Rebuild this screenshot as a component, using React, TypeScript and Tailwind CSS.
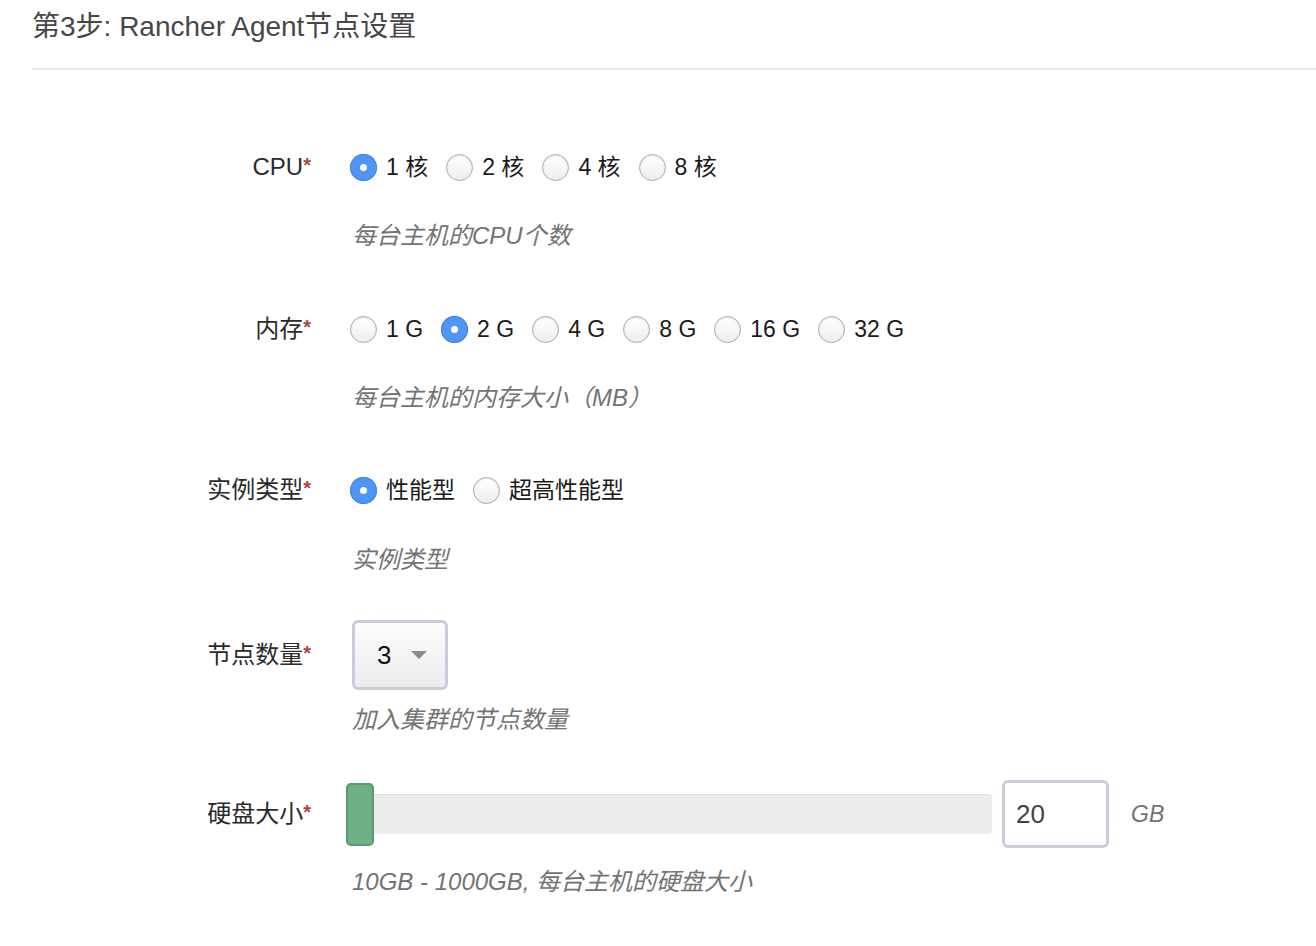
const font = { fontFamily: '"Liberation Sans", "Noto Sans CJK SC", sans-serif' };

type RadioOption = { label: string; checked?: boolean };

const Radio: React.FC<RadioOption> = ({ label, checked }) => {
  return (
    <label className="flex items-center mr-[18px]">
      {checked ? (
        <span className="flex items-center justify-center w-[27px] h-[27px] rounded-full bg-[#4f95f6] shadow-[inset_0_0_0_1px_#3f86ea]">
          <span className="w-[7px] h-[7px] rounded-full bg-white" />
        </span>
      ) : (
        <span className="w-[27px] h-[27px] rounded-full border border-[#a8a8a8] bg-linear-to-b from-white to-[#eeeeee] shadow-[inset_0_1px_2px_rgba(0,0,0,0.1)]" />
      )}
      <span className="ml-[9px] text-[23px] text-[#1a1a1a] whitespace-pre">{label}</span>
    </label>
  );
};

const Label: React.FC<{ text: string }> = ({ text }) => (
  <div className="text-right text-[24px] text-[#2b2b2b] leading-none">
    {text}
    <span className="text-[#a94442] text-[20px] font-bold align-top">*</span>
  </div>
);

const Help: React.FC<{ text: string; className?: string }> = ({ text, className }) => (
  <>
    <div />
    <p className={`italic text-[24px] leading-[32px] text-[#737373] ml-[2px] ${className ?? ''}`}>{text}</p>
  </>
);

export default function App() {
  return (
    <div className="min-h-screen bg-white pl-[32px]" style={font}>
      <h3 className="pt-[9px] text-[28px] leading-[36px] text-[#474747] mb-[23px]">
        第3步: Rancher Agent节点设置
      </h3>
      <div className="border-t-2 border-[#ebebeb]" />

      <div className="grid grid-cols-[279px_1fr] gap-x-[39px] mt-[62px]">
        <div className="h-[70px] flex items-center justify-end"><Label text="CPU" /></div>
        <div className="h-[70px] flex items-center">
          <Radio label="1 核" checked />
          <Radio label="2 核" />
          <Radio label="4 核" />
          <Radio label="8 核" />
        </div>
        <Help text="每台主机的CPU个数" className="mt-[18px] mb-[42px]" />

        <div className="h-[70px] flex items-center justify-end"><Label text="内存" /></div>
        <div className="h-[70px] flex items-center">
          <Radio label="1 G" />
          <Radio label="2 G" checked />
          <Radio label="4 G" />
          <Radio label="8 G" />
          <Radio label="16 G" />
          <Radio label="32 G" />
        </div>
        <Help text="每台主机的内存大小（MB）" className="mt-[18px] mb-[41px]" />

        <div className="h-[70px] flex items-center justify-end"><Label text="实例类型" /></div>
        <div className="h-[70px] flex items-center">
          <Radio label="性能型" checked />
          <Radio label="超高性能型" />
        </div>
        <Help text="实例类型" className="mt-[19px] mb-[44px]" />

        <div className="h-[70px] flex items-center justify-end"><Label text="节点数量" /></div>
        <div className="h-[70px] flex items-center">
          <div className="ml-[2px] w-[96px] h-[70px] flex items-center pl-[22px] border-[3px] border-[#cdcbd8] rounded-[6px] bg-linear-to-b from-[#fdfdfd] to-[#ececec]">
            <span className="text-[26px] text-[#111] leading-none">3</span>
            <span className="ml-[20px] w-0 h-0 border-x-[8px] border-x-transparent border-t-[8px] border-t-[#8a8a8a]" />
          </div>
        </div>
        <Help text="加入集群的节点数量" className="mt-[14px] mb-[43px]" />

        <div className="h-[70px] flex items-center justify-end"><Label text="硬盘大小" /></div>
        <div className="h-[70px] flex items-center">
          <div className="relative ml-[-4px] w-[646px] h-[40px] rounded-[4px] bg-[#ececec] shadow-[inset_0_1px_1px_rgba(0,0,0,0.05)]">
            <div className="absolute left-0 top-[-11px] w-[28px] h-[63px] rounded-[5px] bg-[#6fb186] border-2 border-[#5a9a6f]" />
          </div>
          <input
            readOnly
            value="20"
            className="ml-[10px] w-[107px] h-[68px] pl-[11px] border-[3px] border-[#cdcbd8] rounded-[6px] bg-white text-[26px] text-[#444] outline-none"
            style={font}
          />
          <span className="ml-[22px] italic text-[23px] text-[#737373]">GB</span>
        </div>
        <Help text="10GB - 1000GB, 每台主机的硬盘大小" className="mt-[17px]" />
      </div>
    </div>
  );
}
